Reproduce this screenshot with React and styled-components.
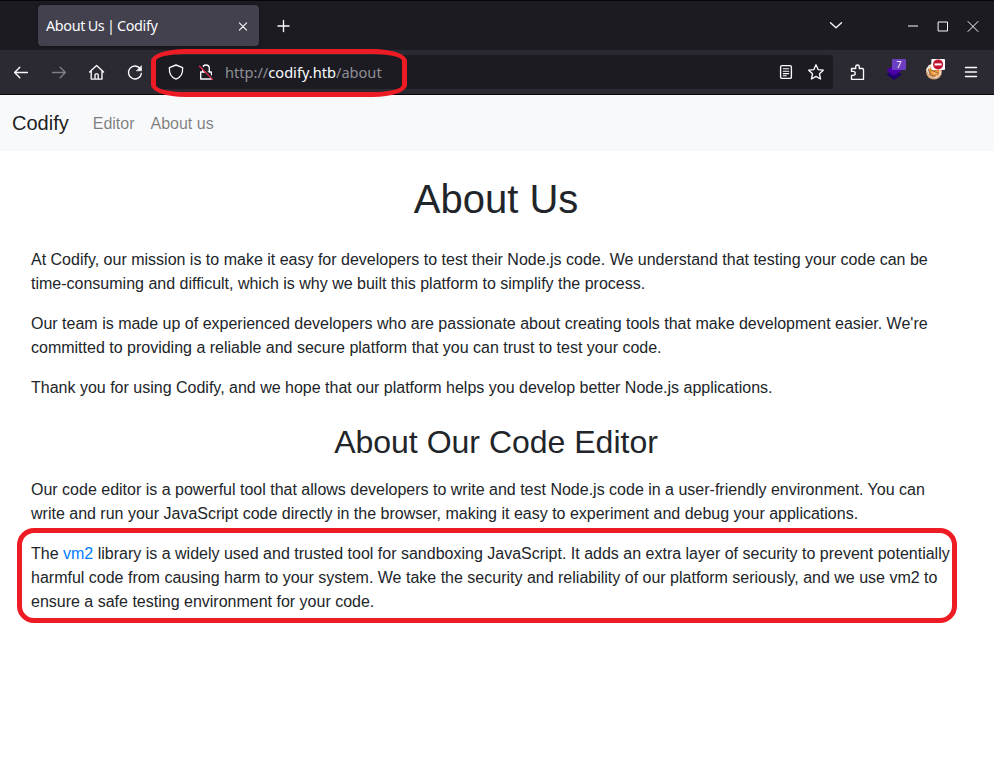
import React from "react";
import styled, { createGlobalStyle } from "styled-components";

const GlobalStyle = createGlobalStyle`
  *, *::before, *::after { box-sizing: border-box; }
  html, body { margin: 0; background: #fff; }
  body { overflow: hidden; }
`;

const Window = styled.div`
  position: relative;
  width: 994px;
  height: 761px;
  background: #fff;
  font-family: "Liberation Sans", Arial, sans-serif;
  color: #212529;
  overflow: hidden;
`;

const TabBar = styled.header`
  display: flex;
  align-items: center;
  height: 50px;
  padding: 0 11px 0 38px;
  background: #1c1b22;
  border-top: 1px solid #02080e;
  color: #fbfbfe;
`;

const Tab = styled.div`
  display: flex;
  align-items: center;
  justify-content: space-between;
  width: 221px;
  height: 41px;
  padding: 0 6px 0 8px;
  border-radius: 4px;
  background: #42414d;
  box-shadow: 0 0 3px rgba(0, 0, 0, 0.45);
  font: 14.4px "Noto Sans", sans-serif;
  letter-spacing: -0.34px;
  word-spacing: -0.9px;
  white-space: nowrap;
`;

const Slot = styled.span`
  display: flex;
  align-items: center;
  justify-content: center;
  flex: none;
  width: 20px;
  height: 20px;
  margin-left: ${(p) => p.$ml || 0}px;
  opacity: ${(p) => (p.$dim ? 0.4 : 1)};
`;

const Glyph = styled.svg`
  display: block;
  width: 20px;
  height: 20px;
  fill: none;
  stroke: #fbfbfe;
  stroke-width: 1.35;
  stroke-linecap: round;
  stroke-linejoin: round;
  overflow: visible;
`;

const WindowControls = styled.div`
  display: flex;
  margin-left: auto;
`;

const Toolbar = styled.div`
  display: flex;
  align-items: center;
  height: 45px;
  padding: 0 13px 1px 11px;
  background: #2b2a33;
  border-bottom: 1px solid #08080b;
`;

const UrlBar = styled.div`
  display: flex;
  align-items: center;
  width: 677px;
  height: 34px;
  margin-left: 11px;
  padding: 0 7px 0 10px;
  border-radius: 4px;
  background: #1c1b22;
`;

const Address = styled.span`
  flex: 1;
  margin-left: 9px;
  font: 14.6px "Noto Sans", sans-serif;
  color: #8f8f96;
  white-space: nowrap;
`;

const Host = styled.span`
  color: #fbfbfe;
`;

const SiteNav = styled.nav`
  display: flex;
  align-items: center;
  height: 56px;
  padding: 0 12px;
  background: #f8f9fa;
`;

const Brand = styled.span`
  margin-right: 24px;
  font-size: 20px;
  line-height: 30px;
  color: rgba(0, 0, 0, 0.9);
`;

const NavLink = styled.span`
  margin-right: 16px;
  padding-top: 2px;
  font-size: 16px;
  line-height: 24px;
  color: rgba(0, 0, 0, 0.5);
`;

const Content = styled.main`
  padding: 24px 33px 0 31px;
`;

const Title = styled.h1`
  margin: 0 0 25px;
  font-size: 40px;
  font-weight: 400;
  line-height: 48px;
  text-align: center;
`;

const Subtitle = styled.h2`
  margin: 23px 0 17px;
  font-size: 32px;
  font-weight: 400;
  line-height: 38px;
  text-align: center;
`;

const Paragraph = styled.p`
  margin: 0 0 16px;
  font-size: 16px;
  line-height: 24px;
`;

const Link = styled.a`
  color: #007bff;
`;

const Highlight = styled.div`
  position: absolute;
  left: ${(p) => p.$x}px;
  top: ${(p) => p.$y}px;
  width: ${(p) => p.$w}px;
  height: ${(p) => p.$h}px;
  border: 5px solid #ed1c24;
  border-radius: ${(p) => p.$radius};
  pointer-events: none;
`;

const ExtensionBadge = styled.span`
  position: absolute;
  left: 6px;
  top: -3px;
  width: 14px;
  height: 11px;
  border-radius: 1px;
  background: #6c3ec1;
  color: #fff;
  font: 9.5px/11px "Noto Sans", sans-serif;
  text-align: center;
`;

const Extension = styled.span`
  position: relative;
  width: 20px;
  height: 20px;
`;

const Icon = ({ children, ...rest }) => (
  <Glyph viewBox="0 0 20 20" aria-hidden="true" {...rest}>{children}</Glyph>
);

const Layers = () => (
  <Extension>
    <Icon>
      <path d="M.3 12.600 8 8l8 4.600L8 18Z" fill="#20006d" stroke="none" />
      <path d="M.3 8.300 8 3l8 5.300-8 5.400Z" fill="#4b00a8" stroke="none" />
    </Icon>
    <ExtensionBadge>7</ExtensionBadge>
  </Extension>
);

const Cookie = () => (
  <Icon>
    <g stroke="none">
      <circle cx="9" cy="9.5" r="8" fill="#d9aa80" />
      <path d="M1 7.5 4 3l6-1 5 4 1 6-5 4-6-2Z" fill="#eee2d4" />
      <path d="m3.5 7.5 4-3 7 3.5-.5 5-6 2-3.5-2Z" fill="#ee8a28" />
      <path d="m6 9 2 1 5-1-1 3-4 1Z" fill="#f7b162" />
    </g>
    <path d="m3.5 7.5 1.8 5.5 5 1.2M6 8l7 3" stroke="#6d6259" strokeWidth="0.8" />
    <g stroke="none">
      <rect x="6.300" y="-3" width="13.700" height="11" rx="1" fill="#fff" />
      <circle cx="13.100" cy="2.400" r="5" fill="#c4122f" />
      <path d="M9.600 1.400h7v2h-7z" fill="#fff" />
    </g>
  </Icon>
);

export default function App() {
  return (
    <Window>
      <GlobalStyle />
      <TabBar>
        <Tab>
          About Us | Codify
          <Slot>
            <Icon><path d="m6.4 6.9 7.2 7.2m0-7.2-7.2 7.2" strokeWidth="1.1" /></Icon>
          </Slot>
        </Tab>
        <Slot $ml={15}>
          <Icon><path d="M4 10h11M9.500 4.500v11" /></Icon>
        </Slot>
        <WindowControls>
          <Slot>
            <Icon><path d="m4.5 6.8 5.5 5 5.5-5" /></Icon>
          </Slot>
          <Slot $ml={57}>
            <Icon><path d="M5 10h10" strokeWidth="1" strokeLinecap="butt" /></Icon>
          </Slot>
          <Slot $ml={10}>
            <Icon><path d="M5.500 6h9v9h-9Z" strokeWidth="1" strokeLinejoin="miter" /></Icon>
          </Slot>
          <Slot $ml={10}>
            <Icon><path d="m5 5.500 10 10m0-10-10 10" strokeWidth="1" /></Icon>
          </Slot>
        </WindowControls>
      </TabBar>

      <Toolbar>
        <Slot>
          <Icon><path d="M16.4 10.500H3.600M8.800 5.300l-5.200 5.200 5.200 5.200" /></Icon>
        </Slot>
        <Slot $ml={18} $dim>
          <Icon><path d="M3.600 10.500h12.800M11.200 5.300l5.200 5.200-5.200 5.200" /></Icon>
        </Slot>
        <Slot $ml={18}>
          <Icon>
            <path d="m2.6 10 7-6.500 7 6.500M4.200 8.700v8.400h10.800V8.700M8 17.100v-4.200q0-1 1-1h1.200q1 0 1 1v4.200" />
          </Icon>
        </Slot>
        <Slot $ml={18}>
          <Icon>
            <path d="M15.3 6.800A6.500 6.500 0 1 0 16.4 11.400" />
            <path d="M16.500 4v4.800h-4.800Z" fill="#fbfbfe" strokeWidth="0.6" />
          </Icon>
        </Slot>
        <UrlBar>
          <Slot>
            <Icon>
              <path d="M10 3 3.4 5.6C3 11.4 5.4 15.5 10 17.1c4.6-1.6 7-5.7 6.6-11.5Z" />
            </Icon>
          </Slot>
          <Slot $ml={10}>
            <Icon>
              <path d="M4.7 10h10.6v7H4.7ZM6.7 10V6.300a3.300 3.300 0 0 1 6.600 0V10" />
              <path d="m4.500 3.400 13 13.200" stroke="#1c1b22" strokeWidth="1.500" />
              <path d="m3.500 4.200 13 13.200" stroke="#e22850" />
            </Icon>
          </Slot>
          <Address>http://<Host>codify.htb</Host>/about</Address>
          <Slot>
            <Icon>
              <rect x="4.6" y="3.6" width="10.8" height="12.8" rx="1.5" />
              <path d="M7.3 6.8h5.4M7.3 9.3h5.4M7.3 11.6h5.4M7.3 13.8h3" strokeWidth="1.1" />
            </Icon>
          </Slot>
          <Slot $ml={10}>
            <Icon>
              <path d="m10 2.8 2.1 4.8 5.2.6-3.8 3.6 1 5.2-4.5-2.6L5.5 17l1-5.2-3.8-3.6 5.2-.6Z" />
            </Icon>
          </Slot>
        </UrlBar>
        <Slot $ml={14}>
          <Icon>
            <path d="M4.500 17.300v-4h1.700a2 2 0 0 0 0-4H4.500V6.500h4.200V4.800a1.800 1.800 0 0 1 3.600 0v1.700h3.100q1.100 0 1.100 1v9.800Z" />
          </Icon>
        </Slot>
        <Slot $ml={19}><Layers /></Slot>
        <Slot $ml={19}><Cookie /></Slot>
        <Slot $ml={16}>
          <Icon><path d="M4.500 5.500h11M4.500 10h11M4.500 14.500h11" /></Icon>
        </Slot>
      </Toolbar>

      <SiteNav>
        <Brand>Codify</Brand>
        <NavLink>Editor</NavLink>
        <NavLink>About us</NavLink>
      </SiteNav>

      <Content>
        <Title>About Us</Title>
        <Paragraph>
          At Codify, our mission is to make it easy for developers to test their Node.js code. We understand that
          testing your code can be time-consuming and difficult, which is why we built this platform to simplify the
          process.
        </Paragraph>
        <Paragraph>
          Our team is made up of experienced developers who are passionate about creating tools that make development
          easier. We're committed to providing a reliable and secure platform that you can trust to test your code.
        </Paragraph>
        <Paragraph>
          Thank you for using Codify, and we hope that our platform helps you develop better Node.js applications.
        </Paragraph>
        <Subtitle>About Our Code Editor</Subtitle>
        <Paragraph>
          Our code editor is a powerful tool that allows developers to write and test Node.js code in a user-friendly
          environment. You can write and run your JavaScript code directly in the browser, making it easy to
          experiment and debug your applications.
        </Paragraph>
        <Paragraph>
          The <Link>vm2</Link> library is a widely used and trusted tool for sandboxing JavaScript. It adds an extra
          layer of security to prevent potentially harmful code from causing harm to your system. We take the security
          and reliability of our platform seriously, and we use vm2 to ensure a safe testing environment for your
          code.
        </Paragraph>
      </Content>

      <Highlight $x={151} $y={49} $w={256} $h={48} $radius="34px / 12px" />
      <Highlight $x={17} $y={528} $w={940} $h={95} $radius="17px" />
    </Window>
  );
}
